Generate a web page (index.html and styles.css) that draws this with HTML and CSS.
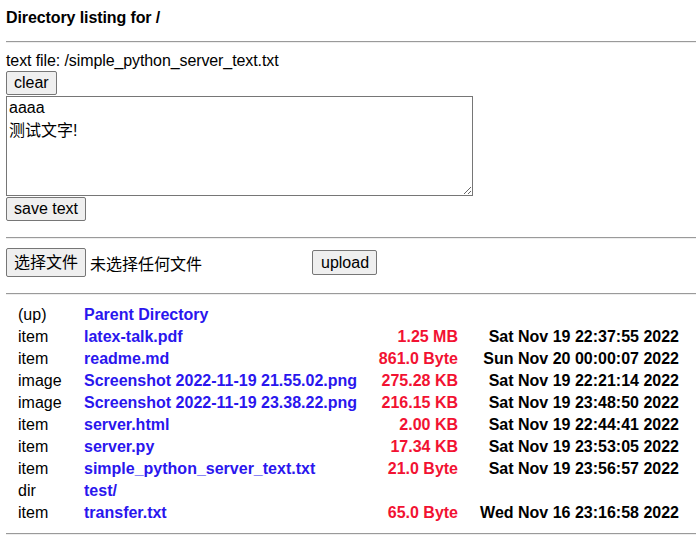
FILE: index.html
```html
<!DOCTYPE html>
<html>
<head>
<meta charset="utf-8">
<title>Directory listing for /</title>
<link rel="stylesheet" href="styles.css">
</head>
<body>
<div class="title">Directory listing for /</div>
<hr class="rule rule-top">
<div class="editor">
  <div class="filename">text file: /simple_python_server_text.txt</div>
  <button class="btn">clear</button>
  <textarea class="text">aaaa
测试文字!</textarea>
  <button class="btn">save text</button>
</div>
<hr class="rule">
<div class="uploader">
  <div class="file-input">
    <button class="btn btn-file">选择文件</button>
    <span class="file-none">未选择任何文件</span>
  </div>
  <button class="btn btn-upload">upload</button>
</div>
<hr class="rule">
<table class="listing">
  <colgroup>
    <col class="c-type"><col class="c-name"><col class="c-size"><col class="c-date">
  </colgroup>
  <tr><td class="type">(up)</td><td class="name"><a href="#">Parent Directory</a></td><td class="size"></td><td class="date"></td></tr>
  <tr><td class="type">item</td><td class="name"><a href="#">latex-talk.pdf</a></td><td class="size">1.25 MB</td><td class="date">Sat Nov 19 22:37:55 2022</td></tr>
  <tr><td class="type">item</td><td class="name"><a href="#">readme.md</a></td><td class="size">861.0 Byte</td><td class="date">Sun Nov 20 00:00:07 2022</td></tr>
  <tr><td class="type">image</td><td class="name"><a href="#">Screenshot 2022-11-19 21.55.02.png</a></td><td class="size">275.28 KB</td><td class="date">Sat Nov 19 22:21:14 2022</td></tr>
  <tr><td class="type">image</td><td class="name"><a href="#">Screenshot 2022-11-19 23.38.22.png</a></td><td class="size">216.15 KB</td><td class="date">Sat Nov 19 23:48:50 2022</td></tr>
  <tr><td class="type">item</td><td class="name"><a href="#">server.html</a></td><td class="size">2.00 KB</td><td class="date">Sat Nov 19 22:44:41 2022</td></tr>
  <tr><td class="type">item</td><td class="name"><a href="#">server.py</a></td><td class="size">17.34 KB</td><td class="date">Sat Nov 19 23:53:05 2022</td></tr>
  <tr><td class="type">item</td><td class="name"><a href="#">simple_python_server_text.txt</a></td><td class="size">21.0 Byte</td><td class="date">Sat Nov 19 23:56:57 2022</td></tr>
  <tr><td class="type">dir</td><td class="name"><a href="#">test/</a></td><td class="size"></td><td class="date"></td></tr>
  <tr><td class="type">item</td><td class="name"><a href="#">transfer.txt</a></td><td class="size">65.0 Byte</td><td class="date">Wed Nov 16 23:16:58 2022</td></tr>
</table>
<hr class="rule">
</body>
</html>
```
FILE: styles.css
```css
html, body {
  margin: 0;
  background: #fff;
}
body {
  padding: 9px 0 0 6px;
  font-family: "Liberation Sans", "Noto Sans CJK SC", sans-serif;
  font-size: 16px;
  color: #000;
}
.title {
  font-weight: bold;
  line-height: 18px;
  letter-spacing: -0.1px;
}
.rule {
  margin: 16px 0 0 0;
  border: 0;
  border-top: 1px solid #9a9a9a;
  border-bottom: 1px solid #eeeeee;
  height: 0;
}
.rule-top {
  margin-top: 14px;
}
.editor {
  display: flex;
  flex-direction: column;
  align-items: flex-start;
  margin-top: 9px;
}
.filename {
  line-height: 18px;
  letter-spacing: -0.1px;
}
.btn {
  font-family: "Liberation Sans", "Noto Sans CJK SC", sans-serif;
  font-size: 16px;
  color: #000;
  background: #efefef;
  border: 1px solid #767676;
  border-radius: 2px;
  padding: 1px 7px;
  margin: 0;
  height: 24px;
  line-height: 18px;
}
.editor .btn:first-of-type {
  margin-top: 1px;
}
.text {
  display: block;
  box-sizing: border-box;
  width: 467px;
  height: 100px;
  margin: 1px 0 1px 0;
  padding: 2px;
  border: 1px solid #767676;
  font-family: "Liberation Sans", "Noto Sans CJK SC", sans-serif;
  font-size: 16px;
  color: #000;
  resize: both;
}
.uploader {
  display: flex;
  align-items: center;
  margin-top: 9px;
  height: 29px;
}
.file-input {
  display: flex;
  align-items: center;
  width: 306px;
}
.btn-file {
  height: 29px;
  padding: 1px 7px;
}
.file-none {
  margin-left: 4px;
}
.btn-upload {
  height: 25px;
  padding: 1px 7px 1px 8px;
}
.listing {
  margin-top: 9px;
  border-collapse: collapse;
  table-layout: fixed;
  width: 679px;
}
.c-type { width: 72px; }
.c-name { width: 292px; }
.c-size { width: 94px; }
.c-date { width: 221px; }
.listing td {
  padding: 0;
  height: 22px;
  line-height: 18px;
  white-space: nowrap;
}
.type {
  padding-left: 12px !important;
}
.name {
  padding-left: 6px !important;
  font-weight: bold;
}
.name a {
  color: #2a16ee;
  text-decoration: none;
}
.size {
  text-align: right;
  padding-right: 6px !important;
  font-weight: bold;
  color: #f21232;
}
.date {
  text-align: right;
  padding-right: 6px !important;
  font-weight: bold;
}
.listing + .rule {
  margin-top: 9px;
}
```
